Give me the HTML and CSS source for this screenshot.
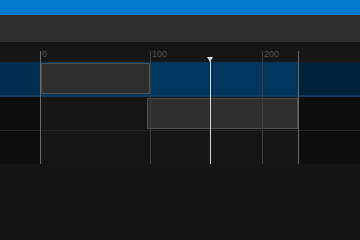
FILE: index.html
```html
<!DOCTYPE html>
<html lang="en">
<head>
    <meta charset="UTF-8">
    <title>Timeline</title>
    <link rel="stylesheet" href="styles.css">
</head>
<body>
    <div class="titlebar"></div>
    <div class="toolbar"></div>

    <div class="timeline">
        <div class="ruler">
            <span class="label" style="left:42px">0</span>
            <span class="label" style="left:152px">100</span>
            <span class="label" style="left:264px">200</span>
        </div>

        <div class="track selected">
            <div class="gutter"></div>
            <div class="lane">
                <div class="clip" style="left:1px;width:109px"></div>
            </div>
            <div class="tail"></div>
        </div>
        <div class="track">
            <div class="gutter"></div>
            <div class="lane">
                <div class="clip" style="left:107px;width:151px"></div>
            </div>
            <div class="tail"></div>
        </div>
        <div class="track last">
            <div class="gutter"></div>
            <div class="lane"></div>
            <div class="tail"></div>
        </div>

        <!-- grid lines drawn over the tracks -->
        <div class="line bound" style="left:40px"></div>
        <div class="line tick" style="left:150px"></div>
        <div class="line tick" style="left:262px"></div>
        <div class="line bound" style="left:298px"></div>
        <div class="playhead" style="left:210px"></div>
    </div>
</body>
</html>
```

FILE: styles.css
```css
:root {
    --accent: #007acc;
    --bar: #2d2d2d;
    --bg: #151515;
    --lane: #161616;
    --gutter: #0e0e0e;
}
body {
    margin: 0;
    background: var(--bg);
    font-family: 'Liberation Sans', Arial, sans-serif;
}
.titlebar {
    height: 15px;
    background: var(--accent);
}
.toolbar {
    height: 27px;
    background: var(--bar);
}
.timeline {
    position: relative;
}
.ruler {
    position: relative;
    height: 19px;
    background: var(--lane);
    border-bottom: 1px solid #1b1b1b;
}
.label {
    position: absolute;
    top: 7px;
    font-size: 9px;
    line-height: 11px;
    color: #545454;
}
.track {
    display: grid;
    grid-template-columns: 40px 258px 1fr;
    height: 33px;
    border-bottom: 1px solid #262626;
}
.track.last {
    border-bottom: none;
}
.gutter,
.tail {
    background: var(--gutter);
}
.lane {
    position: relative;
    background: var(--lane);
}
.track.selected {
    border-bottom: 2px solid #0f3b60;
}
.track.selected .gutter {
    background: #002f50;
}
.track.selected .lane {
    background: #00365e;
}
.track.selected .tail {
    background: #00213a;
}
.clip {
    position: absolute;
    top: 1px;
    bottom: 1px;
    box-sizing: border-box;
    background: #2e2e2e;
    border: 1px solid #4f4f4f;
}
.line {
    position: absolute;
    top: 9px;
    width: 1px;
    height: 113px;
}
.bound {
    background: #6a6a6a;
}
.tick {
    background: #3c3c3c;
}
.playhead {
    position: absolute;
    top: 18px;
    width: 1px;
    height: 104px;
    background: #d8d8d8;
}
.playhead::before {
    content: "";
    position: absolute;
    top: -3px;
    left: -3px;
    border-left: 3.5px solid transparent;
    border-right: 3.5px solid transparent;
    border-top: 5px solid #e0e0e0;
}
```
